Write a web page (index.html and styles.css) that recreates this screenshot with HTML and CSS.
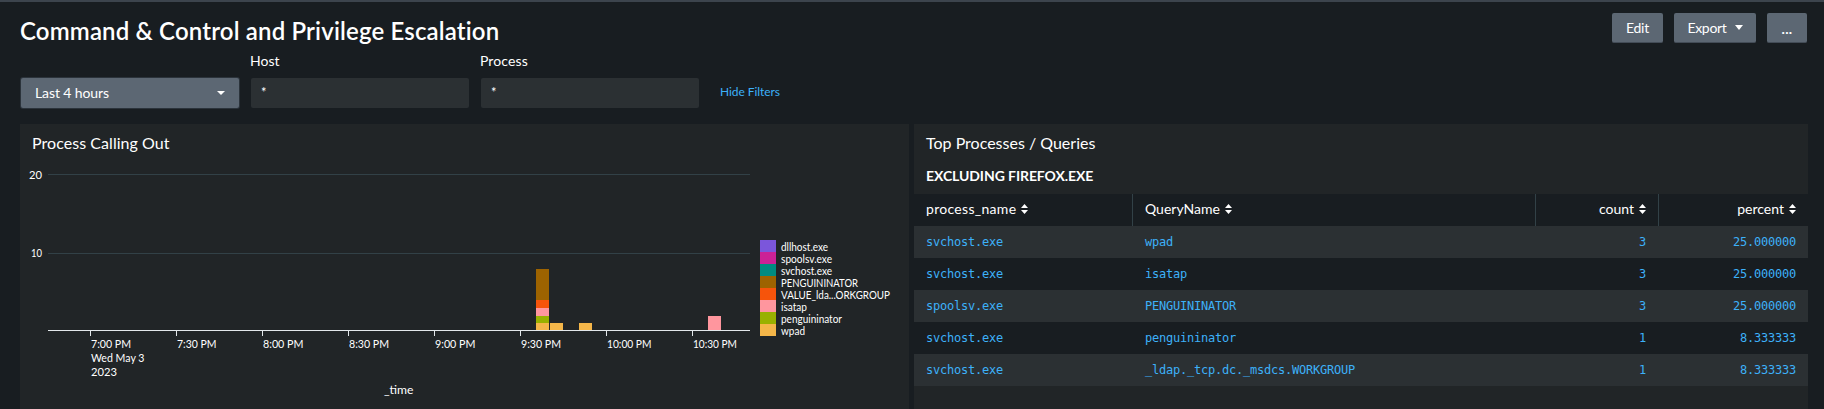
FILE: index.html
```html
<!DOCTYPE html>
<html lang="en">
<head>
<meta charset="utf-8">
<title>Command &amp; Control and Privilege Escalation</title>
<link rel="stylesheet" href="styles.css">
</head>
<body>
<header class="header">
  <h1 class="title">Command &amp; Control and Privilege Escalation</h1>
  <div class="actions">
    <button class="btn btn-edit">Edit</button>
    <button class="btn btn-export">Export <span class="caret"></span></button>
    <button class="btn btn-more">...</button>
  </div>
</header>
<section class="filters">
  <div class="field"><span class="label"></span><div class="select">Last 4 hours <span class="caret caret-small"></span></div></div>
  <div class="field"><span class="label">Host</span><div class="input">*</div></div>
  <div class="field"><span class="label label-process">Process</span><div class="input">*</div></div>
  <a class="hide">Hide Filters</a>
</section>
<main class="panels">
  <section class="panel">
    <h2 class="panel-title title-chart">Process Calling Out</h2>
    <svg class="chart" width="889" height="245" viewBox="20 164 889 245">
      <g fill="#324147">
        <rect x="48" y="174" width="702" height="1"/>
        <rect x="48" y="253" width="702" height="1"/>
      </g>
      <g fill="#e3e8eb">
        <rect x="48" y="330" width="702" height="1"/>
        <rect x="90" y="331" width="1" height="5"/><rect x="176" y="331" width="1" height="5"/>
        <rect x="262" y="331" width="1" height="5"/><rect x="348" y="331" width="1" height="5"/>
        <rect x="434" y="331" width="1" height="5"/><rect x="520" y="331" width="1" height="5"/>
        <rect x="606" y="331" width="1" height="5"/><rect x="692" y="331" width="1" height="5"/>
      </g>
      <rect x="536" y="269" width="13" height="31" fill="#9d6300"/>
      <rect x="536" y="300" width="13" height="8" fill="#f6540b"/>
      <rect x="536" y="308" width="13" height="8" fill="#ff969e"/>
      <rect x="536" y="316" width="13" height="7" fill="#99b100"/>
      <rect x="536" y="323" width="13" height="7" fill="#f4b649"/>
      <rect x="550" y="323" width="13" height="7" fill="#f4b649"/>
      <rect x="579" y="323" width="13" height="7" fill="#f4b649"/>
      <rect x="708" y="316" width="13" height="14" fill="#ff969e"/>
      <g class="axis">
        <text x="29" y="179" textLength="13" lengthAdjust="spacingAndGlyphs">20</text>
        <text x="31" y="257" textLength="11" lengthAdjust="spacingAndGlyphs">10</text>
        <text x="91" y="348" textLength="40" lengthAdjust="spacingAndGlyphs">7:00 PM</text>
        <text x="91" y="362" textLength="53.5" lengthAdjust="spacingAndGlyphs">Wed May 3</text>
        <text x="91" y="376" textLength="26" lengthAdjust="spacingAndGlyphs">2023</text>
        <text x="177" y="348" textLength="39.5" lengthAdjust="spacingAndGlyphs">7:30 PM</text>
        <text x="263" y="348" textLength="40.5" lengthAdjust="spacingAndGlyphs">8:00 PM</text>
        <text x="349" y="348" textLength="40" lengthAdjust="spacingAndGlyphs">8:30 PM</text>
        <text x="435" y="348" textLength="40.5" lengthAdjust="spacingAndGlyphs">9:00 PM</text>
        <text x="521" y="348" textLength="40" lengthAdjust="spacingAndGlyphs">9:30 PM</text>
        <text x="607" y="348" textLength="44.5" lengthAdjust="spacingAndGlyphs">10:00 PM</text>
        <text x="693" y="348" textLength="44" lengthAdjust="spacingAndGlyphs">10:30 PM</text>
        <text x="384" y="394" textLength="29.5" lengthAdjust="spacingAndGlyphs">_time</text>
      </g>
      <rect x="760" y="240" width="16" height="12" fill="#7b56db"/>
      <rect x="760" y="252" width="16" height="12" fill="#cb2196"/>
      <rect x="760" y="264" width="16" height="12" fill="#008c80"/>
      <rect x="760" y="276" width="16" height="12" fill="#9d6300"/>
      <rect x="760" y="288" width="16" height="12" fill="#f6540b"/>
      <rect x="760" y="300" width="16" height="12" fill="#ff969e"/>
      <rect x="760" y="312" width="16" height="12" fill="#99b100"/>
      <rect x="760" y="324" width="16" height="12" fill="#f4b649"/>
      <g class="legend">
        <text x="781" y="251" textLength="47" lengthAdjust="spacingAndGlyphs">dllhost.exe</text>
        <text x="781" y="263" textLength="51" lengthAdjust="spacingAndGlyphs">spoolsv.exe</text>
        <text x="781" y="275" textLength="51" lengthAdjust="spacingAndGlyphs">svchost.exe</text>
        <text x="781" y="287" textLength="77" lengthAdjust="spacingAndGlyphs">PENGUININATOR</text>
        <text x="781" y="299" textLength="109" lengthAdjust="spacingAndGlyphs">VALUE_lda...ORKGROUP</text>
        <text x="781" y="311" textLength="26" lengthAdjust="spacingAndGlyphs">isatap</text>
        <text x="781" y="323" textLength="61" lengthAdjust="spacingAndGlyphs">penguininator</text>
        <text x="781" y="335" textLength="24" lengthAdjust="spacingAndGlyphs">wpad</text>
      </g>
    </svg>
  </section>
  <section class="panel">
    <h2 class="panel-title">Top Processes / Queries</h2>
    <h3 class="subtitle">EXCLUDING FIREFOX.EXE</h3>
    <div class="table">
      <div class="row head">
        <div class="cell"><span class="h-process">process_name</span><svg class="sort" width="7" height="10"><path d="M3.5 0L7 4H0zM0 6H7L3.5 10z"/></svg></div>
        <div class="cell"><span>QueryName</span><svg class="sort" width="7" height="10"><path d="M3.5 0L7 4H0zM0 6H7L3.5 10z"/></svg></div>
        <div class="cell num"><span>count</span><svg class="sort" width="7" height="10"><path d="M3.5 0L7 4H0zM0 6H7L3.5 10z"/></svg></div>
        <div class="cell num"><span>percent</span><svg class="sort" width="7" height="10"><path d="M3.5 0L7 4H0zM0 6H7L3.5 10z"/></svg></div>
      </div>
      <div class="row odd"><div class="cell">svchost.exe</div><div class="cell">wpad</div><div class="cell num count">3</div><div class="cell num">25.000000</div></div>
      <div class="row"><div class="cell">svchost.exe</div><div class="cell">isatap</div><div class="cell num count">3</div><div class="cell num">25.000000</div></div>
      <div class="row odd"><div class="cell">spoolsv.exe</div><div class="cell">PENGUININATOR</div><div class="cell num count">3</div><div class="cell num">25.000000</div></div>
      <div class="row"><div class="cell">svchost.exe</div><div class="cell">penguininator</div><div class="cell num count">1</div><div class="cell num">8.333333</div></div>
      <div class="row odd"><div class="cell">svchost.exe</div><div class="cell">_ldap._tcp.dc._msdcs.WORKGROUP</div><div class="cell num count">1</div><div class="cell num">8.333333</div></div>
    </div>
  </section>
</main>
</body>
</html>
```
FILE: styles.css
```css
* { box-sizing: border-box; }
body {
  margin: 0;
  height: 409px;
  overflow: hidden;
  border-top: 2px solid #3c444d;
  background: #181d21;
  color: #fff;
  font: 14px/20px Lato, sans-serif;
}
.header {
  display: flex;
  justify-content: space-between;
  height: 49px;
  padding: 11px 17px 0 20px;
}
.title {
  margin: 3px 0 0;
  font-size: 24px;
  line-height: 30px;
  font-weight: 600;
  letter-spacing: 0.16px;
}
.actions { display: flex; gap: 11px; }
.btn {
  display: flex;
  align-items: center;
  justify-content: center;
  height: 30px;
  padding: 0;
  border: 0;
  border-bottom: 1px solid #434c57;
  border-radius: 2px;
  background: #5c6773;
  color: #fff;
  font: 14px/20px Lato, sans-serif;
}
.btn-edit { width: 51px; letter-spacing: -0.2px; }
.btn-export { width: 82px; gap: 8px; letter-spacing: -0.3px; }
.btn-more { width: 40px; padding-top: 2px; font-weight: 700; letter-spacing: 0.4px; }
.caret {
  border: 4px solid transparent;
  border-top: 5px solid #fff;
  border-bottom: 0;
}
.caret-small { border-top-width: 4px; }
.filters {
  display: flex;
  gap: 12px;
  height: 73px;
  padding-left: 21px;
}
.field { display: flex; flex-direction: column; width: 218px; }
.label { height: 27px; margin-left: -1px; line-height: 20px; }
.label-process { letter-spacing: 0.1px; }
.select, .input {
  height: 30px;
  border-radius: 2px;
  background: #2b3033;
}
.select {
  display: flex;
  align-items: center;
  justify-content: space-between;
  padding: 0 14px 1px;
  background: #5c6773;
  box-shadow: 0 0 0 1px #2b333b;
  letter-spacing: -0.1px;
}
.input { padding: 4px 10px; font-size: 13px; }
.hide {
  margin: 31px 0 0 9px;
  color: #3db1f9;
  font-size: 12px;
  line-height: 20px;
  letter-spacing: -0.06px;
}
.panels {
  display: grid;
  grid-template-columns: 889px 894px;
  gap: 5px;
  height: 285px;
  padding-left: 20px;
}
.panel { background: #212527; }
.panel-title {
  height: 40px;
  margin: 0;
  padding: 9px 12px 0;
  font-size: 16px;
  font-weight: 400;
  line-height: 20px;
}
.title-chart { letter-spacing: 0.05px; }
.chart { display: block; }
.axis { fill: #fff; font-size: 11.5px; }
.legend { fill: #fff; font-size: 11px; }
.subtitle {
  height: 30px;
  margin: 0;
  padding: 2px 12px 0;
  font-size: 14px;
  font-weight: 700;
  letter-spacing: -0.08px;
}
.row {
  display: grid;
  grid-template-columns: 219px 403px 123px 149px;
  height: 32px;
  background: #181d21;
  color: #3db1f9;
  font: 12px/32px "DejaVu Sans Mono", monospace;
  letter-spacing: -0.224px;
}
.odd { background: #2b3033; }
.cell { padding: 0 12px; white-space: nowrap; }
.num { text-align: right; }
.count { padding-right: 13px; }
.head {
  color: #fff;
  font: 14px/32px Lato, sans-serif;
  letter-spacing: 0;
}
.head .cell { display: flex; align-items: center; gap: 5px; line-height: 30px; padding-bottom: 2px; }
.head .cell:not(:last-child) { border-right: 1px solid #324147; }
.head .num { justify-content: flex-end; }
.h-process { letter-spacing: 0.3px; }
.sort { fill: #fff; }
```
